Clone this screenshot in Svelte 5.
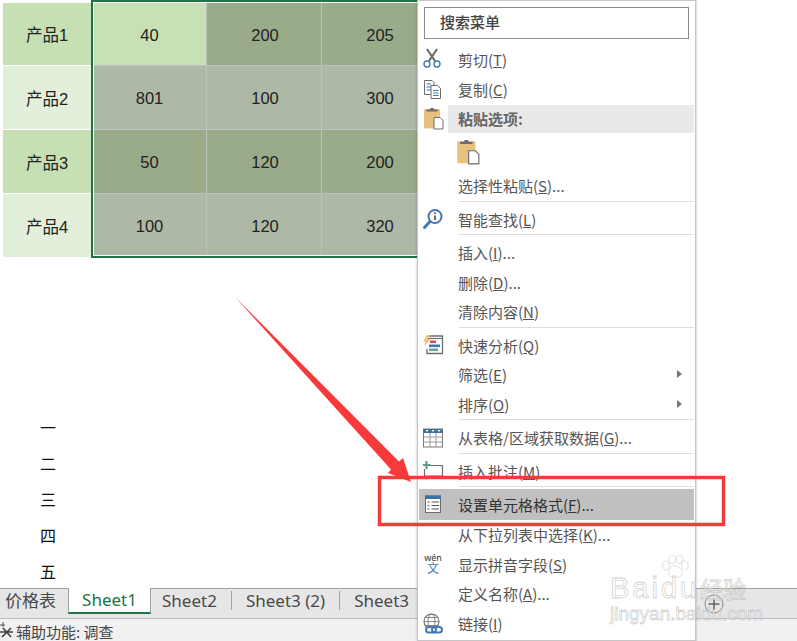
<script>
	const rows = [
		{ name: '产品1', values: [40, 200, 205], tones: ['light', 'dark', 'dark'] },
		{ name: '产品2', values: [801, 100, 300], tones: ['grey', 'grey', 'grey'] },
		{ name: '产品3', values: [50, 120, 200], tones: ['dark', 'dark', 'dark'] },
		{ name: '产品4', values: [100, 120, 320], tones: ['grey', 'grey', 'grey'] }
	];
	const numerals = ['一', '二', '三', '四', '五'];
	const tabs = ['Sheet2', 'Sheet3 (2)', 'Sheet3'];

	const menu = [
		{ label: '剪切', key: 'T', icon: 'cut' },
		{ label: '复制', key: 'C', icon: 'copy' },
		{ type: 'header', label: '粘贴选项:' },
		{ type: 'paste' },
		{ label: '选择性粘贴', key: 'S', more: true },
		{ type: 'sep' },
		{ label: '智能查找', key: 'L', icon: 'lookup' },
		{ type: 'sep' },
		{ label: '插入', key: 'I', more: true },
		{ label: '删除', key: 'D', more: true },
		{ label: '清除内容', key: 'N' },
		{ type: 'sep' },
		{ label: '快速分析', key: 'Q', icon: 'quick' },
		{ label: '筛选', key: 'E', sub: true },
		{ label: '排序', key: 'O', sub: true },
		{ type: 'sep' },
		{ label: '从表格/区域获取数据', key: 'G', more: true, icon: 'table' },
		{ type: 'sep' },
		{ label: '插入批注', key: 'M', icon: 'comment' },
		{ type: 'sep', tight: true },
		{ label: '设置单元格格式', key: 'F', more: true, icon: 'format', active: true },
		{ label: '从下拉列表中选择', key: 'K', more: true },
		{ label: '显示拼音字段', key: 'S', icon: 'pinyin' },
		{ label: '定义名称', key: 'A', more: true },
		{ label: '链接', key: 'I', icon: 'link' }
	];
</script>

{#snippet clipboard(big)}
	<svg class="ico" class:big viewBox="0 0 22 22">
		<rect x="2" y="1" width="16" height="19.5" rx="1" fill="#e8c07f" />
		<path d="M4.5 3.5 V1.5 H8 A2 2 0 0 1 12 1.5 H15.5 V3.5 Z" fill="#6d6d6d" />
		<path d="M12 9.5 H18 L21 12.5 V21 H12 Z" fill="#fff" stroke="#6d6d6d" />
	</svg>
{/snippet}

<div class="page">
	<div class="sheet">
		<div class="grid">
			{#each rows as row, r}
				<div class="cell head" class:alt={r % 2 === 1}>{row.name}</div>
				{#each row.values as value, c}
					<div class="cell {row.tones[c]}">{value}</div>
				{/each}
			{/each}
			<div class="selection"></div>
		</div>
		<div class="numerals">
			{#each numerals as n}
				<div>{n}</div>
			{/each}
		</div>
	</div>

	<div class="tabs">
		<div class="tab first">价格表</div>
		<div class="tab current">Sheet1</div>
		{#each tabs as tab, i}
			<div class="tab plain" class:divided={i > 0}>{tab}</div>
		{/each}
		<div class="add">
			<svg viewBox="0 0 20 20" width="20" height="20">
				<circle cx="10" cy="10" r="9" fill="none" stroke="#8b8b8b" />
				<path d="M4.5 10 H15.5 M10 4.5 V15.5" stroke="#666" stroke-width="1.6" />
			</svg>
		</div>
	</div>

	<div class="status">
		<svg viewBox="0 0 14 16" width="14" height="16">
			<path d="M3 0 V5 M0 3 H5" stroke="#555" stroke-width="1" />
			<path d="M2 15 L11 6 M3 6 L11 15 M0 10 H13" stroke="#444" stroke-width="1.7" />
		</svg>
		<span>辅助功能: 调查</span>
	</div>

	<div class="menu">
		<div class="search">搜索菜单</div>
		{#each menu as item}
			{#if item.type === 'sep'}
				<div class="sep" class:tight={item.tight}></div>
			{:else if item.type === 'header'}
				<div class="header">
					<span class="side">{@render clipboard(false)}</span>
					<span class="title">{item.label}</span>
				</div>
			{:else if item.type === 'paste'}
				<div class="paste">{@render clipboard(true)}</div>
			{:else}
				<div class="item" class:active={item.active}>
					<span class="side">
						{#if item.icon === 'cut'}
							<svg class="ico" viewBox="0 0 22 22">
								<path d="M5 1 L13 13 M15 1 L7 13" stroke="#666" stroke-width="2" fill="none" />
								<circle cx="5" cy="16" r="3" fill="none" stroke="#3f7ab5" stroke-width="1.4" />
								<circle cx="15" cy="16" r="3" fill="none" stroke="#3f7ab5" stroke-width="1.4" />
							</svg>
						{:else if item.icon === 'copy'}
							<svg class="ico" viewBox="0 0 22 22">
								<path d="M2.5 2.5 H10 L12 4.5 V16.5 H2.5 Z" fill="#fff" stroke="#6d6d6d" />
								<path d="M4.5 6 H9 M4.5 9 H9 M4.5 12 H9" stroke="#3f7ab5" />
								<path d="M9 7.5 H15.5 L18.5 10.5 V20.5 H9 Z" fill="#fff" stroke="#6d6d6d" />
								<path d="M11 12.5 H16.5 M11 15 H16.5 M11 17.5 H16.5" stroke="#3f7ab5" />
							</svg>
						{:else if item.icon === 'lookup'}
							<svg class="ico" viewBox="0 0 22 22">
								<circle cx="13" cy="8.5" r="6.5" fill="#fff" stroke="#3f7ab5" stroke-width="2" />
								<path d="M8 13.5 L2.5 19.5" stroke="#3f7ab5" stroke-width="3" stroke-linecap="round" />
								<path d="M13 7.5 V12 M13 4.5 V6" stroke="#555" stroke-width="1.8" />
							</svg>
						{:else if item.icon === 'quick'}
							<svg class="ico" viewBox="0 0 22 22">
								<path d="M5 2 H20.5 V19.5 H5 V15" fill="none" stroke="#6d6d6d" stroke-width="1.3" />
								<path d="M6 4.5 H20 " stroke="#6d6d6d" stroke-width="1.2" />
								<rect x="8" y="6.5" width="6" height="2.6" fill="#d1553a" />
								<rect x="7" y="10.5" width="11" height="2.6" fill="#3f7ab5" />
								<rect x="7" y="14.5" width="9" height="2.6" fill="#6aa594" />
								<path d="M4.5 1 L8 1 L5.5 5.5 L8 5.5 L2.5 12.5 L3.8 7.5 L1.5 7.5 Z" fill="#efc27a" />
							</svg>
						{:else if item.icon === 'table'}
							<svg class="ico" viewBox="0 0 22 22">
								<rect x="1.5" y="2" width="19" height="18" fill="#fff" stroke="#7a7a7a" />
								<rect x="1.5" y="2" width="19" height="4" fill="#3f6f9f" />
								<path d="M1.5 10 H20.5 M1.5 15 H20.5 M8 6 V20 M14 6 V20" stroke="#9a9a9a" />
								<path d="M3.5 3 H6.5 L5 5 Z M9.5 3 H12.5 L11 5 Z M15.5 3 H18.5 L17 5 Z" fill="#fff" />
							</svg>
						{:else if item.icon === 'comment'}
							<svg class="ico" viewBox="0 0 22 22">
								<path d="M8 5.5 H20.5 V16 H7 L4.5 18.5 V16 H2.5 V9" fill="none" stroke="#6d6d6d" stroke-width="1.2" />
								<path d="M4.5 1 V9 M1 5 H8.5" stroke="#5c9e86" stroke-width="2.2" />
							</svg>
						{:else if item.icon === 'format'}
							<svg class="ico" viewBox="0 0 22 22">
								<rect x="3.5" y="3" width="15" height="16.5" fill="#fff" stroke="#6d6d6d" />
								<rect x="3" y="2.5" width="16" height="3.5" fill="#3f6f9f" />
								<path d="M9.5 9 H17 M9.5 12.5 H17 M9.5 16 H17" stroke="#555" />
								<path d="M5.5 9 H7.5 M5.5 12.5 H7.5 M5.5 16 H7.5" stroke="#888" stroke-width="1.4" />
							</svg>
						{:else if item.icon === 'pinyin'}
							<span class="wen"><small>wén</small><b>文</b></span>
						{:else if item.icon === 'link'}
							<svg class="ico" viewBox="0 0 22 22">
								<circle cx="9.5" cy="8.5" r="7.5" fill="#fff" stroke="#6d6d6d" stroke-width="1.1" />
								<ellipse cx="9.5" cy="8.5" rx="3.5" ry="7.5" fill="none" stroke="#6d6d6d" stroke-width=".8" />
								<path d="M2 8.5 H17 M3.5 4.5 H15.5 M3.5 12.5 H15.5" stroke="#6d6d6d" stroke-width=".8" />
								<rect x="4" y="14" width="10" height="5.5" rx="2.7" fill="#fff" stroke="#3f7ab5" stroke-width="2" />
								<rect x="10" y="14" width="10" height="5.5" rx="2.7" fill="none" stroke="#3f7ab5" stroke-width="2" />
							</svg>
						{/if}
					</span>
					<span class="label">{item.label}(<u>{item.key}</u>){item.more ? '...' : ''}</span>
					{#if item.sub}<span class="caret"></span>{/if}
				</div>
			{/if}
		{/each}
	</div>

	<svg class="annotation" viewBox="0 0 797 641">
		<polygon points="235,297 399,461.5 403,458 411,482 388,473 391,469.5" fill="#f93a3a" />
		<rect x="379.5" y="477.5" width="344" height="47" fill="none" stroke="#f23c3c" stroke-width="3.5" />
	</svg>

	<div class="watermark">
		<svg class="paw" viewBox="0 0 40 32">
			<g fill="rgba(255,255,255,.5)" stroke="rgba(170,170,170,.45)">
				<ellipse cx="8" cy="14" rx="4.5" ry="6" />
				<ellipse cx="16" cy="6" rx="4.5" ry="5.5" />
				<ellipse cx="26" cy="6" rx="4.5" ry="5.5" />
				<ellipse cx="33" cy="14" rx="4.5" ry="6" />
				<path d="M20 14 C13 14 10 23 12 27 C15 31 26 31 29 27 C31 23 27 14 20 14 Z" />
			</g>
		</svg>
		<div class="brand">Baidu<span>经验</span></div>
		<div class="site">jingyan.baidu.com</div>
	</div>
</div>

<style>
	:global(body) {
		margin: 0;
		background: #fff;
	}
	.page {
		position: relative;
		width: 797px;
		height: 641px;
		overflow: hidden;
		display: flex;
		flex-direction: column;
		font-family: "Noto Sans CJK SC", "Noto Sans", sans-serif;
		color: #222;
	}
	.sheet {
		flex: 1;
		min-height: 0;
		overflow: hidden;
	}
	.grid {
		position: relative;
		display: grid;
		grid-template-columns: 88px 116px 115px 115px;
		grid-template-rows: 63px 64px 64px 64px;
		padding: 3px 0 0 3px;
		width: 414px;
		overflow: hidden;
		box-sizing: content-box;
	}
	.cell {
		display: flex;
		align-items: center;
		justify-content: center;
		font-family: "Liberation Sans", "Noto Sans CJK SC", sans-serif;
		font-size: 16.5px;
		box-sizing: border-box;
		padding: 2px 0 0 2px;
		border-right: 1px solid #bfc2bb;
		border-bottom: 1px solid #bfc2bb;
	}
	.head {
		background: #c6e0b4;
		color: #222;
		border-color: #fff;
		border-right: 0;
		padding: 0;
	}
	.head.alt {
		background: #e2efda;
	}
	.light {
		background: #c7e0b5;
	}
	.dark {
		background: #9aab8a;
	}
	.grey {
		background: #aeb8a6;
	}
	.selection {
		position: absolute;
		left: 91px;
		top: 0;
		width: 400px;
		height: 254px;
		border: 2px solid #217346;
		box-shadow: inset 0 0 0 1px #fff;
	}
	.numerals {
		padding: 151px 0 0 40px;
		font-size: 16px;
		line-height: 36px;
		color: #111;
	}
	.tabs {
		height: 29px;
		flex: none;
		display: flex;
		align-items: flex-start;
		background: #e6e6e6;
		border-top: 1px solid #a3a3a3;
		border-bottom: 1px solid #bdbdbd;
		font-family: "Noto Sans", sans-serif;
		font-size: 17px;
		color: #4a4a4a;
		position: relative;
	}
	.tab {
		height: 24px;
		line-height: 22px;
		white-space: nowrap;
	}
	.first {
		width: 68px;
		padding-left: 5px;
		box-sizing: border-box;
		font-family: "Noto Sans CJK SC", sans-serif;
		font-size: 17px;
	}
	.current {
		width: 83px;
		box-sizing: border-box;
		background: #fff;
		color: #217346;
		text-align: center;
		border-left: 1px solid #a3a3a3;
		border-right: 1px solid #a3a3a3;
		border-bottom: 2px solid #217346;
		margin-top: -1px;
		height: 26px;
		line-height: 24px;
	}
	.plain {
		padding: 0 14px;
		margin-top: 2px;
		height: 19px;
		line-height: 19px;
	}
	.plain:not(.divided) {
		padding-left: 11px;
	}
	.divided {
		border-left: 1px solid #a3a3a3;
	}
	.add {
		position: absolute;
		left: 704px;
		top: 5px;
		line-height: 0;
	}
	.status {
		height: 22px;
		flex: none;
		display: flex;
		align-items: center;
		gap: 2px;
		background: #f1f1f1;
		font-size: 15px;
		color: #444;
	}
	.status span {
		position: relative;
		top: 1px;
	}
	.menu {
		position: absolute;
		left: 417px;
		top: 0;
		width: 279px;
		height: 641px;
		box-sizing: border-box;
		background: #fff;
		border: 1px solid #c6c6c6;
		box-shadow: -1px 0 2px rgba(0, 0, 0, .12), 1px 0 1px rgba(0, 0, 0, .1);
		padding-top: 6px;
		font-size: 15px;
		color: #555;
	}
	.search {
		margin: 0 6px 5.5px 6px;
		height: 32px;
		box-sizing: border-box;
		border: 1px solid #8a8a8a;
		padding-left: 15px;
		line-height: 27px;
		font-weight: 500;
		color: #444;
	}
	.item,
	.header {
		display: flex;
		align-items: center;
		height: 29.7px;
		margin: 0 1px;
		padding-left: 3px;
		position: relative;
	}
	.item.active {
		height: 31px;
		background: #c0c0c0;
		color: #333;
	}
	.header {
		height: 28px;
		margin-top: 1.5px;
	}
	.side {
		width: 22px;
		height: 22px;
		flex: none;
		margin-right: 14px;
		line-height: 0;
	}
	.ico {
		width: 22px;
		height: 22px;
		display: block;
	}
	.ico.big {
		width: 25px;
		height: 25px;
	}
	.title {
		flex: 1;
		align-self: stretch;
		margin: 0 0 0 -10px;
		padding-left: 10px;
		line-height: 27px;
		background: #e9e9e9;
		font-weight: 700;
		color: #666;
	}
	.paste {
		height: 37.5px;
		padding: 7px 0 0 37px;
		box-sizing: border-box;
	}
	.label {
		white-space: nowrap;
	}
	.caret {
		position: absolute;
		right: 12px;
		top: 50%;
		margin-top: -5px;
		border-left: 5px solid #777;
		border-top: 4.5px solid transparent;
		border-bottom: 4.5px solid transparent;
	}
	.sep {
		height: 1px;
		margin: 0 1px 2.7px 41px;
		background: #dedede;
	}
	.sep.tight {
		margin-bottom: 1.5px;
	}
	.wen {
		display: flex;
		flex-direction: column;
		align-items: center;
		line-height: 1;
		color: #333;
	}
	.wen small {
		font-size: 9px;
		line-height: 9px;
		font-family: "Noto Sans", sans-serif;
	}
	.wen b {
		font-size: 12px;
		line-height: 12px;
		font-weight: 400;
		color: #3f7ab5;
	}
	.annotation {
		position: absolute;
		inset: 0;
		width: 797px;
		height: 641px;
		pointer-events: none;
	}
	.watermark {
		position: absolute;
		left: 610px;
		top: 552px;
		width: 187px;
		height: 72px;
		font-family: "Liberation Sans", "Noto Sans CJK SC", sans-serif;
		pointer-events: none;
	}
	.paw {
		position: absolute;
		left: 49px;
		top: 3px;
		width: 32px;
		height: 24px;
	}
	.brand,
	.site {
		position: absolute;
		left: 0;
		white-space: nowrap;
		color: rgba(255, 255, 255, .55);
		-webkit-text-stroke: .8px rgba(170, 170, 170, .55);
	}
	.brand {
		top: 22px;
		font-size: 29px;
		line-height: 28px;
		letter-spacing: 3px;
	}
	.brand span {
		font-size: 23px;
		letter-spacing: 0;
		margin-left: 1px;
	}
	.site {
		top: 54px;
		font-size: 19px;
		line-height: 16px;
	}
</style>
